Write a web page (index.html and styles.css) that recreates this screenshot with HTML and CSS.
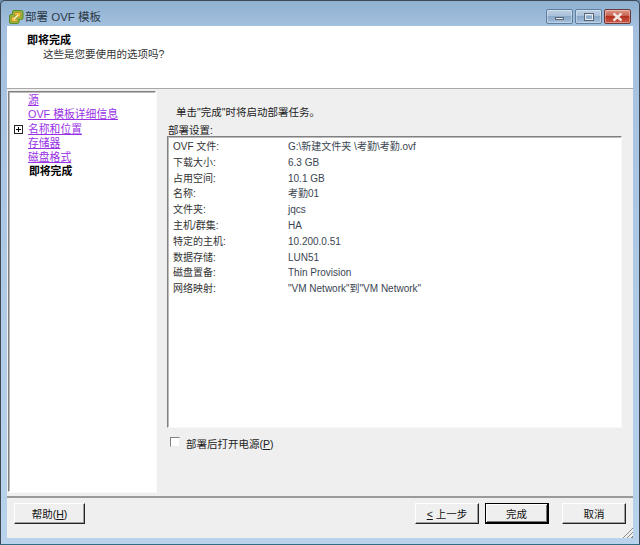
FILE: index.html
```html
<!DOCTYPE html>
<html lang="zh-CN">
<head>
<meta charset="utf-8">
<title>部署 OVF 模板</title>
<link rel="stylesheet" href="styles.css">
</head>
<body>
<div class="window">
  <div class="titlebar">
    <svg class="app-icon" width="16" height="16" viewBox="0 0 16 16">
      <path d="M6 1.5h7.5a1.5 1.5 0 0 1 1.5 1.5v6a1.5 1.5 0 0 1-1.5 1.5H11v2.5a1.5 1.5 0 0 1-1.5 1.5H3a1.5 1.5 0 0 1-1.5-1.5V7A1.5 1.5 0 0 1 3 5.500h1.500V3A1.500 1.500 0 0 1 6 1.500z" fill="#8fb53a" stroke="#5f8a2a"/>
      <path d="M7 3.500h5.500v4.500H9V6H6.500V4z" fill="#f2c23c" stroke="#b5862a" stroke-width=".7"/>
      <path d="M3.500 8H7v2h2v2.500H3.500z" fill="#f0c848" stroke="#b5862a" stroke-width=".7"/>
      <path d="M6 10l4-4" stroke="#fdf6d8" stroke-width="1.300"/>
    </svg>
    <span class="title">部署 OVF 模板</span>
    <div class="caption">
      <div class="cap-btn"><span class="glyph-min"></span></div>
      <div class="cap-btn"><span class="glyph-max"></span></div>
      <div class="cap-btn close"><svg width="13" height="10" viewBox="0 0 13 10"><path d="M2.500 1.500l8 7M10.500 1.500l-8 7" stroke="#f4e4e0" stroke-width="2.400"/></svg></div>
    </div>
  </div>
  <div class="client">
    <header class="header">
      <h1 class="head-title">即将完成</h1>
      <p class="head-sub">这些是您要使用的选项吗?</p>
    </header>
    <div class="main">
      <nav class="nav">
        <a class="nav-item" href="#">源</a>
        <a class="nav-item" href="#">OVF 模板详细信息</a>
        <a class="nav-item" href="#"><span class="expander"></span>名称和位置</a>
        <a class="nav-item" href="#">存储器</a>
        <a class="nav-item" href="#">磁盘格式</a>
        <span class="nav-item current">即将完成</span>
      </nav>
      <section class="panel">
        <p class="intro">单击"完成"时将启动部署任务。</p>
        <div class="group-label">部署设置:</div>
        <dl class="settings">
          <div class="row"><dt>OVF 文件:</dt><dd>G:\新建文件夹 \考勤\考勤.ovf</dd></div>
          <div class="row"><dt>下载大小:</dt><dd>6.3 GB</dd></div>
          <div class="row"><dt>占用空间:</dt><dd>10.1 GB</dd></div>
          <div class="row"><dt>名称:</dt><dd>考勤01</dd></div>
          <div class="row"><dt>文件夹:</dt><dd>jqcs</dd></div>
          <div class="row"><dt>主机/群集:</dt><dd>HA</dd></div>
          <div class="row"><dt>特定的主机:</dt><dd>10.200.0.51</dd></div>
          <div class="row"><dt>数据存储:</dt><dd>LUN51</dd></div>
          <div class="row"><dt>磁盘置备:</dt><dd>Thin Provision</dd></div>
          <div class="row"><dt>网络映射:</dt><dd>"VM Network"到"VM Network"</dd></div>
        </dl>
        <label class="power"><span class="checkbox"></span>部署后打开电源(<u>P</u>)</label>
      </section>
    </div>
    <footer class="footer">
      <button class="btn help">帮助(<u>H</u>)</button>
      <div class="footer-right">
        <button class="btn"><u>&lt;</u> 上一步</button>
        <button class="btn default">完成</button>
        <button class="btn cancel">取消</button>
      </div>
    </footer>
    <div class="grip"></div>
  </div>
</div>
</body>
</html>
```
FILE: styles.css
```css
* { box-sizing: border-box; margin: 0; padding: 0; }
html, body { width: 640px; height: 545px; overflow: hidden; }
body { font-family: "Liberation Sans", "Noto Sans CJK SC", sans-serif; font-size: 10.5px; color: #222; background: #6a8fb5; }
.window {
  width: 640px; height: 545px; display: flex; flex-direction: column;
  padding: 0 7px 6px;
  background: linear-gradient(180deg, #8fb0d0 0, #a5c1df 26px, #b9d3ec 100%);
  border: 1px solid #3d4a55; border-radius: 5px 5px 0 0; border-bottom-color: #2f6f86;
}
.titlebar { height: 25px; flex: none; display: flex; align-items: center; }
.app-icon { margin: 7px 1px 0 0; flex: none; }
.title { font-size: 11.5px; color: #2c3a48; margin-top: 5px; }
.caption { margin-left: auto; margin-right: 1px; display: flex; gap: 2px; align-self: flex-start; padding-top: 8px; }
.cap-btn {
  width: 27px; height: 15px; display: flex; align-items: center; justify-content: center;
  border: 1px solid #5f7d9c; border-radius: 2px;
  background: linear-gradient(180deg, #bdd0e4 0, #a9c1da 45%, #8aa8c8 50%, #a4bfdb 100%);
  box-shadow: inset 0 0 0 1px rgba(255,255,255,.35);
}
.cap-btn.close { border-color: #6b3a38; background: linear-gradient(180deg, #dd9a8c 0, #c9604e 45%, #b4301f 50%, #cc5a48 100%); }
.glyph-min { width: 9px; height: 3px; background: #e6e9ee; border: 1px solid #5a6778; margin-top: 4px; }
.glyph-max { width: 10px; height: 8px; border: 2px solid #e6e9ee; outline: 1px solid #5a6778; outline-offset: -1px; }
.client { flex: 1; min-height: 0; display: flex; flex-direction: column; background: #efefef; margin: 0 -1px; position: relative; }
.header { height: 63px; flex: none; background: #fff; padding: 7px 0 0 20px; border-bottom: 1px solid #a8a8a8; }
.head-title { font-size: 11px; font-weight: 700; line-height: 14px; color: #000; }
.head-sub { font-size: 10.5px; line-height: 14px; padding-left: 16px; color: #333; }
.main { flex: 1; min-height: 0; display: flex; padding: 2px 0 0 1px; }
.nav {
  width: 148px; flex: none; height: 401px; background: #fff; padding-top: 1px;
  border: 1px solid #fff; border-top: 1px solid #808080; border-left: 1px solid #808080;
  box-shadow: inset 1px 1px 0 #bbb, 1px 1px 0 #fafafa;
  display: flex; flex-direction: column;
}
.nav-item { height: 14.3px; line-height: 14.3px; padding-left: 19px; font-size: 10.8px; color: #9932e6; text-decoration: underline; white-space: nowrap; position: relative; }
.nav-item.current { color: #000; font-weight: 700; text-decoration: none; padding-left: 20px; }
.expander { position: absolute; left: 5px; top: 3px; width: 9px; height: 9px; border: 1px solid #222; background: linear-gradient(#000,#000) center/5px 1px no-repeat, linear-gradient(#000,#000) center/1px 5px no-repeat, #fff; }
.panel { flex: 1; min-width: 0; padding: 14px 11px 0; display: flex; flex-direction: column; }
.intro { font-size: 10.5px; line-height: 14px; padding-left: 9px; color: #222; }
.group-label { font-size: 10.5px; line-height: 13px; margin: 5px 0 -1px; padding-left: 1px; color: #222; }
.settings {
  height: 292px; flex: none; background: #fff; padding: 2px 0 0 5px;
  border: 1px solid #808080; border-right-color: #f8f8f8; border-bottom-color: #f8f8f8;
  box-shadow: inset 1px 1px 0 #bbb;
}
.row { display: flex; height: 15.8px; line-height: 15.8px; font-size: 10px; color: #333; }
.row dt { width: 115px; flex: none; }
.row dd { color: #3a4552; white-space: nowrap; }
.power { display: flex; align-items: center; margin-top: 9px; padding-left: 3px; font-size: 10.5px; line-height: 14px; color: #222; }
.checkbox { width: 10px; height: 10px; background: #fff; border: 1px solid #808080; border-right-color: #eee; border-bottom-color: #eee; margin: -4px 6px 0 0; }
.footer { flex: none; height: 42px; border-top: 2px solid #9a9a9a; display: flex; justify-content: space-between; padding: 5px 7px 0; background: #efefef; align-items: flex-start; }
.footer-right { display: flex; }
.btn {
  width: 64px; height: 21px; font: inherit; font-size: 10.5px; color: #111; background: #efefef;
  border: 1px solid #fff; border-right: 1px solid #222; border-bottom: 1px solid #222; border-radius: 0;
  box-shadow: inset -1px -1px 0 #a0a0a0;
}
.btn u { text-underline-offset: 1px; }
.btn.help { width: 71px; }
.btn.default { margin-left: 6px; border: 1px solid #000; box-shadow: inset 1px 1px 0 #fff, inset -1px -1px 0 #777; border-right-width: 2px; border-bottom-width: 2px; }
.btn.cancel { margin-left: 13px; }
.grip { position: absolute; right: 0; bottom: 0; width: 11px; height: 11px; background: repeating-linear-gradient(135deg, transparent 0 2px, #8a8a8a 2px 3px); clip-path: polygon(100% 0, 100% 100%, 0 100%); }
```
